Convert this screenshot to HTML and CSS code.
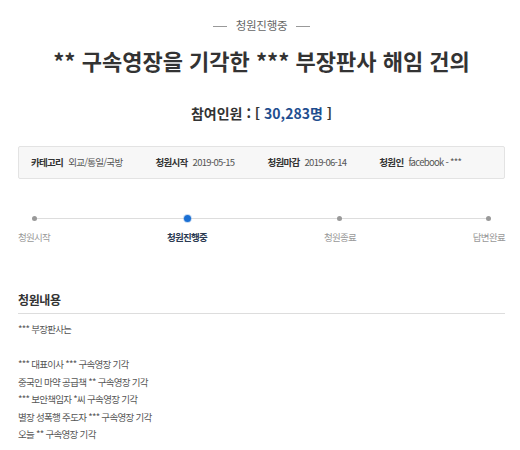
FILE: index.html
```html
<!DOCTYPE html>
<html lang="ko">
<head>
    <meta charset="UTF-8">
    <meta name="viewport" content="width=device-width, initial-scale=1.0">
    <title>청원 상세</title>
    <link rel="stylesheet" href="styles.css">
</head>
<body>
    <div class="petition">
        <p class="status"><span>청원진행중</span></p>
        <h1 class="title">** 구속영장을 기각한 *** 부장판사 해임 건의</h1>
        <p class="count">참여인원 : [ <span class="num">30,283명</span> ]</p>

        <ul class="info">
            <li><b>카테고리</b> 외교/통일/국방</li>
            <li><b>청원시작</b> 2019-05-15</li>
            <li><b>청원마감</b> 2019-06-14</li>
            <li><b>청원인</b> facebook - ***</li>
        </ul>

        <ol class="steps">
            <li><i class="dot"></i><span>청원시작</span></li>
            <li class="on"><i class="dot"></i><span>청원진행중</span></li>
            <li><i class="dot"></i><span>청원종료</span></li>
            <li><i class="dot"></i><span>답변완료</span></li>
        </ol>

        <h2 class="content-title">청원내용</h2>
        <div class="content">
            <p>*** 부장판사는</p>
            <p>&nbsp;</p>
            <p>*** 대표이사 *** 구속영장 기각</p>
            <p>중국인 마약 공급책 ** 구속영장 기각</p>
            <p>*** 보안책임자 *씨 구속영장 기각</p>
            <p>별장 성폭행 주도자 *** 구속영장 기각</p>
            <p>오늘 ** 구속영장 기각</p>
        </div>
    </div>
</body>
</html>
```

FILE: styles.css
```css
body {
    font-family: "Noto Sans CJK KR", "Noto Sans", sans-serif;
    background-color: #fff;
    color: #333;
    margin: 0;
    padding: 0;
}

.petition {
    width: 487px;
    margin-left: 18px;
}

.status {
    margin: 0;
    padding-top: 15px;
    line-height: 20px;
    font-size: 11.5px;
    color: #666;
    text-align: center;
    letter-spacing: -0.3px;
}

.status span::before,
.status span::after {
    content: "";
    display: inline-block;
    width: 14px;
    height: 1px;
    background-color: #999;
    vertical-align: middle;
}

.status span::before {
    margin-right: 9px;
}

.status span::after {
    margin-left: 9px;
}

.title {
    margin: 10px 0 0;
    line-height: 30px;
    font-size: 22px;
    font-weight: bold;
    color: #333;
    text-align: center;
    letter-spacing: 0;
}

.count {
    margin: 28px 0 0;
    line-height: 20px;
    font-size: 14px;
    font-weight: bold;
    color: #333;
    text-align: center;
}

.count .num {
    color: #1f4e8f;
}

.info {
    display: flex;
    gap: 33px;
    list-style: none;
    margin: 23px 0 0;
    padding: 0 12px;
    line-height: 31px;
    background-color: #f7f7f7;
    border: 1px solid #e3e3e3;
    border-radius: 2px;
    font-size: 9.5px;
    color: #555;
    letter-spacing: -0.7px;
}

.info b {
    color: #333;
    margin-right: 3px;
}

.steps {
    position: relative;
    display: flex;
    justify-content: space-between;
    list-style: none;
    margin: 35px 0 0;
    padding: 0;
}

.steps::before {
    content: "";
    position: absolute;
    top: 4px;
    left: 17px;
    right: 17px;
    height: 1px;
    background-color: #ddd;
}

.steps li {
    position: relative;
    display: flex;
    flex-direction: column;
    align-items: center;
    gap: 8px;
    font-size: 9.5px;
    line-height: 14px;
    color: #999;
    letter-spacing: -0.7px;
}

.steps .dot {
    display: block;
    width: 5px;
    height: 5px;
    margin: 1.5px 0;
    border-radius: 50%;
    background-color: #999;
}

.steps .on {
    color: #2b3a52;
    font-weight: bold;
}

.steps .on .dot {
    width: 7px;
    height: 7px;
    margin: 0.5px 0;
    background-color: #1a6fd3;
    box-shadow: 0 0 0 1px rgba(26, 111, 211, 0.25);
}

.content-title {
    margin: 47px 0 0;
    padding-bottom: 4px;
    border-bottom: 1px solid #ddd;
    line-height: 18px;
    font-size: 12px;
    font-weight: bold;
    color: #333;
    letter-spacing: -0.4px;
}

.content {
    padding-top: 7px;
    font-size: 9.5px;
    line-height: 17.5px;
    color: #555;
    letter-spacing: -0.7px;
}

.content p {
    margin: 0;
}
```
